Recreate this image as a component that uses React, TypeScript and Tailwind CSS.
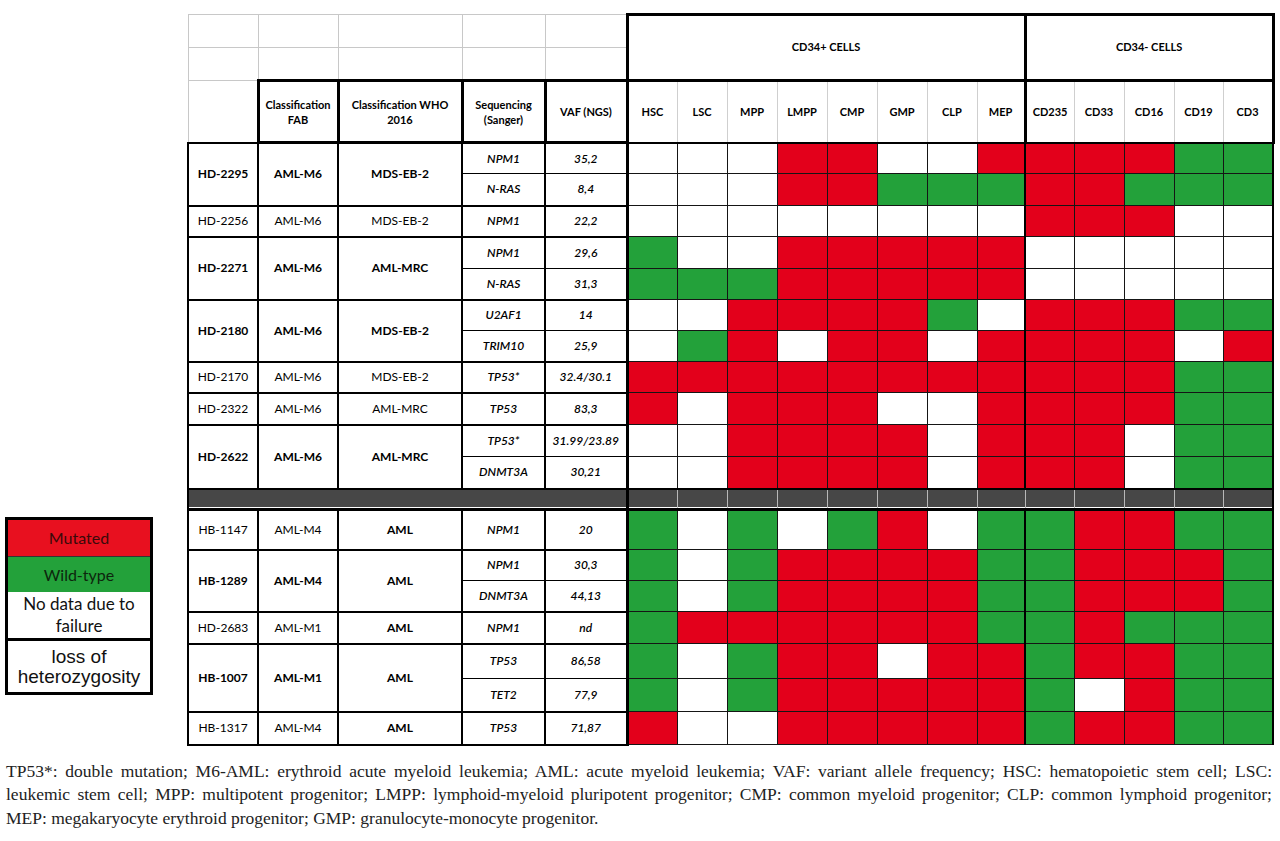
import React from "react";

type Row = { gene: string; vaf: string; c: string; h: string };
type Group = { id: string; fab: string; who: string; bold: boolean; rows: Row[] };

const top: Group[] = [
  { id: "HD-2295", fab: "AML-M6", who: "MDS-EB-2", bold: true, rows: [
    { gene: "NPM1", vaf: "35,2", c: "WWWRRWWRRRRGG", h: "h-[31px]" },
    { gene: "N-RAS", vaf: "8,4", c: "WWWRRGGGRRGGG", h: "h-[32px]" },
  ] },
  { id: "HD-2256", fab: "AML-M6", who: "MDS-EB-2", bold: false, rows: [
    { gene: "NPM1", vaf: "22,2", c: "WWWWWWWWRRRWW", h: "h-[31px]" },
  ] },
  { id: "HD-2271", fab: "AML-M6", who: "AML-MRC", bold: true, rows: [
    { gene: "NPM1", vaf: "29,6", c: "GWWRRRRRWWWWW", h: "h-[32px]" },
    { gene: "N-RAS", vaf: "31,3", c: "GGGRRRRRWWWWW", h: "h-[31px]" },
  ] },
  { id: "HD-2180", fab: "AML-M6", who: "MDS-EB-2", bold: true, rows: [
    { gene: "U2AF1", vaf: "14", c: "WWRRRRGWRRRGG", h: "h-[31px]" },
    { gene: "TRIM10", vaf: "25,9", c: "WGRWRRWRRRRWR", h: "h-[31px]" },
  ] },
  { id: "HD-2170", fab: "AML-M6", who: "MDS-EB-2", bold: false, rows: [
    { gene: "TP53*", vaf: "32.4/30.1", c: "RRRRRRRRRRRGG", h: "h-[31px]" },
  ] },
  { id: "HD-2322", fab: "AML-M6", who: "AML-MRC", bold: false, rows: [
    { gene: "TP53", vaf: "83,3", c: "RWRRRWWRRRRGG", h: "h-[32px]" },
  ] },
  { id: "HD-2622", fab: "AML-M6", who: "AML-MRC", bold: true, rows: [
    { gene: "TP53*", vaf: "31.99/23.89", c: "WWRRRRWRRRWGG", h: "h-[32px]" },
    { gene: "DNMT3A", vaf: "30,21", c: "WWRRRRWRRRWGG", h: "h-[32px]" },
  ] },
];

const bottom: Group[] = [
  { id: "HB-1147", fab: "AML-M4", who: "AML", bold: false, rows: [
    { gene: "NPM1", vaf: "20", c: "GWGWGRWGGRRGG", h: "h-[40px]" },
  ] },
  { id: "HB-1289", fab: "AML-M4", who: "AML", bold: true, rows: [
    { gene: "NPM1", vaf: "30,3", c: "GWGRRRRGGRRRG", h: "h-[31px]" },
    { gene: "DNMT3A", vaf: "44,13", c: "GWGRRRRGGRRRG", h: "h-[31px]" },
  ] },
  { id: "HD-2683", fab: "AML-M1", who: "AML", bold: false, rows: [
    { gene: "NPM1", vaf: "nd", c: "GRRRRRRGGRGGG", h: "h-[32px]" },
  ] },
  { id: "HB-1007", fab: "AML-M1", who: "AML", bold: true, rows: [
    { gene: "TP53", vaf: "86,58", c: "GWGRRWRRGRRGG", h: "h-[35px]" },
    { gene: "TET2", vaf: "77,9", c: "GWGRRRRRGWRGG", h: "h-[33px]" },
  ] },
  { id: "HB-1317", fab: "AML-M4", who: "AML", bold: false, rows: [
    { gene: "TP53", vaf: "71,87", c: "RWWRRRRRGRRGG", h: "h-[33px]" },
  ] },
];

const colHeads = ["HSC", "LSC", "MPP", "LMPP", "CMP", "GMP", "CLP", "MEP", "CD235", "CD33", "CD16", "CD19", "CD3"];

function colorOf(ch: string) {
  if (ch === "R") return "bg-[#e3001b]";
  if (ch === "G") return "bg-[#23a13a]";
  return "bg-white";
}

function edgeOf(i: number) {
  if (i === 0) return "border-l-[3px] border-l-black";
  if (i === 8) return "border-l-2 border-l-black";
  if (i === 12) return "border-r-2 border-r-black";
  return "";
}

function GroupRows({ g }: { g: Group }) {
  const w = g.bold ? "font-bold" : "font-normal";
  return (
    <>
      {g.rows.map((r, ri) => {
        const first = ri === 0;
        const last = ri === g.rows.length - 1;
        const yb = `${first ? "border-t-2" : "border-t"} ${last ? "border-b-2" : "border-b"}`;
        return (
          <tr key={ri} className={r.h}>
            {first && (
              <>
                <td rowSpan={g.rows.length} className={`border-2 border-black text-center text-[12px] ${w}`}>{g.id}</td>
                <td rowSpan={g.rows.length} className={`border-2 border-black text-center text-[12px] ${w}`}>{g.fab}</td>
                <td rowSpan={g.rows.length} className={`border-2 border-black text-center text-[12px] ${g.who === "AML" ? "font-bold" : w}`}>{g.who}</td>
              </>
            )}
            <td className={`border-x-2 border-black ${yb} text-center text-[12px] italic font-semibold`}>{r.gene}</td>
            <td className={`border-x-2 border-black ${yb} text-center text-[12px] italic font-semibold`}>{r.vaf}</td>
            {r.c.split("").map((ch, i) => (
              <td key={i} className={`border border-[#151515] ${colorOf(ch)} ${edgeOf(i)}`} />
            ))}
          </tr>
        );
      })}
    </>
  );
}

export default function App() {
  return (
    <div className="w-[1280px] h-[841px] bg-white overflow-hidden text-black font-['Lato','Open_Sans',sans-serif]">
      <div className="flex items-start">
        <div className="ml-[5px] mt-[517px] w-[148px] shrink-0">
          <div className="border-[3px] border-b-0 border-black">
            <div className="h-[36px] bg-[#e8101f] flex items-center justify-center text-[16px] text-[#3a0a0a]">Mutated</div>
            <div className="h-[36px] bg-[#23a13a] border-t border-[#333] flex items-center justify-center text-[16px] text-[#0d260d]">Wild-type</div>
            <div className="h-[46px] bg-white flex flex-col items-center justify-center text-[17px] leading-[22px] text-[#111]">
              <span>No data due to</span>
              <span>failure</span>
            </div>
          </div>
          <div className="h-[57px] border-[3px] border-black flex flex-col items-center justify-center font-['Liberation_Sans',Arial,sans-serif] text-[19px] leading-[20px] text-[#111]">
            <span>loss of</span>
            <span>heterozygosity</span>
          </div>
        </div>

        <table className="ml-[34px] mt-[13px] border-collapse table-fixed w-[1085px] shrink-0">
          <colgroup>
            <col className="w-[70px]" />
            <col className="w-[80px]" />
            <col className="w-[124px]" />
            <col className="w-[83px]" />
            <col className="w-[82px]" />
            <col className="w-[50px]" />
            <col className="w-[50px]" />
            <col className="w-[50px]" />
            <col className="w-[50px]" />
            <col className="w-[50px]" />
            <col className="w-[50px]" />
            <col className="w-[50px]" />
            <col className="w-[48px]" />
            <col className="w-[49px]" />
            <col className="w-[50px]" />
            <col className="w-[50px]" />
            <col className="w-[49px]" />
            <col className="w-[50px]" />
          </colgroup>
          <tbody>
            <tr className="h-[33px]">
              <td className="border border-[#c8c8c8]" />
              <td className="border border-[#c8c8c8]" />
              <td className="border border-[#c8c8c8]" />
              <td className="border border-[#c8c8c8]" />
              <td className="border border-[#c8c8c8]" />
              <td colSpan={8} rowSpan={2} className="border-[3px] border-black text-center text-[11px] font-bold">CD34+ CELLS</td>
              <td colSpan={5} rowSpan={2} className="border-[3px] border-black text-center text-[11px] font-bold">CD34- CELLS</td>
            </tr>
            <tr className="h-[33px]">
              <td className="border border-[#c8c8c8]" />
              <td className="border border-[#c8c8c8]" />
              <td className="border border-[#c8c8c8]" />
              <td className="border border-[#c8c8c8]" />
              <td className="border border-[#c8c8c8]" />
            </tr>
            <tr className="h-[62px]">
              <td className="border border-[#c8c8c8] border-b-2 border-b-black" />
              <td className="border-[3px] border-black text-center text-[11px] font-bold leading-[15px]">Classification<br />FAB</td>
              <td className="border-[3px] border-black text-center text-[11px] font-bold leading-[15px]">Classification WHO<br />2016</td>
              <td className="border-[3px] border-black text-center text-[11px] font-bold leading-[15px]">Sequencing<br />(Sanger)</td>
              <td className="border-[3px] border-black text-center text-[11px] font-bold leading-[15px]">VAF (NGS)</td>
              {colHeads.map((h, i) => (
                <td
                  key={h}
                  className={`border border-[#cfcfcf] border-t-[3px] border-t-black border-b-2 border-b-black text-center text-[11px] font-bold ${i === 0 ? "border-l-[3px] border-l-black" : ""} ${i === 8 ? "border-l-[3px] border-l-black" : ""} ${i === 12 ? "border-r-[3px] border-r-black" : ""}`}
                >
                  {h}
                </td>
              ))}
            </tr>
            {top.map((g) => (
              <GroupRows key={g.id} g={g} />
            ))}
            <tr className="h-[21px]">
              <td colSpan={5} className="bg-[#474747] border-2 border-black border-b-[3px] shadow-[inset_0_-1px_0_#ffffff]" />
              {colHeads.map((h, i) => (
                <td
                  key={h}
                  className={`bg-[#474747] border border-[#b8b8b8] border-t-2 border-t-black border-b-[3px] border-b-black shadow-[inset_0_-1px_0_#ffffff] ${i === 0 ? "border-l-[3px] border-l-black" : ""} ${i === 12 ? "border-r-2 border-r-black" : ""}`}
                />
              ))}
            </tr>
            {bottom.map((g) => (
              <GroupRows key={g.id} g={g} />
            ))}
          </tbody>
        </table>
      </div>

      <div className="ml-[6px] mt-[14px] w-[1266px] font-['Liberation_Serif','Times_New_Roman',serif] text-[17.5px] leading-[23.5px] text-[#222]">
        <div className="text-justify [text-align-last:justify]">
          TP53*: double mutation; M6-AML: erythroid acute myeloid leukemia; AML: acute myeloid leukemia; VAF: variant allele frequency; HSC: hematopoietic stem cell; LSC:
        </div>
        <div className="text-justify [text-align-last:justify]">
          leukemic stem cell; MPP: multipotent progenitor; LMPP: lymphoid-myeloid pluripotent progenitor; CMP: common myeloid progenitor; CLP: common lymphoid progenitor;
        </div>
        <div>MEP: megakaryocyte erythroid progenitor; GMP: granulocyte-monocyte progenitor.</div>
      </div>
    </div>
  );
}
